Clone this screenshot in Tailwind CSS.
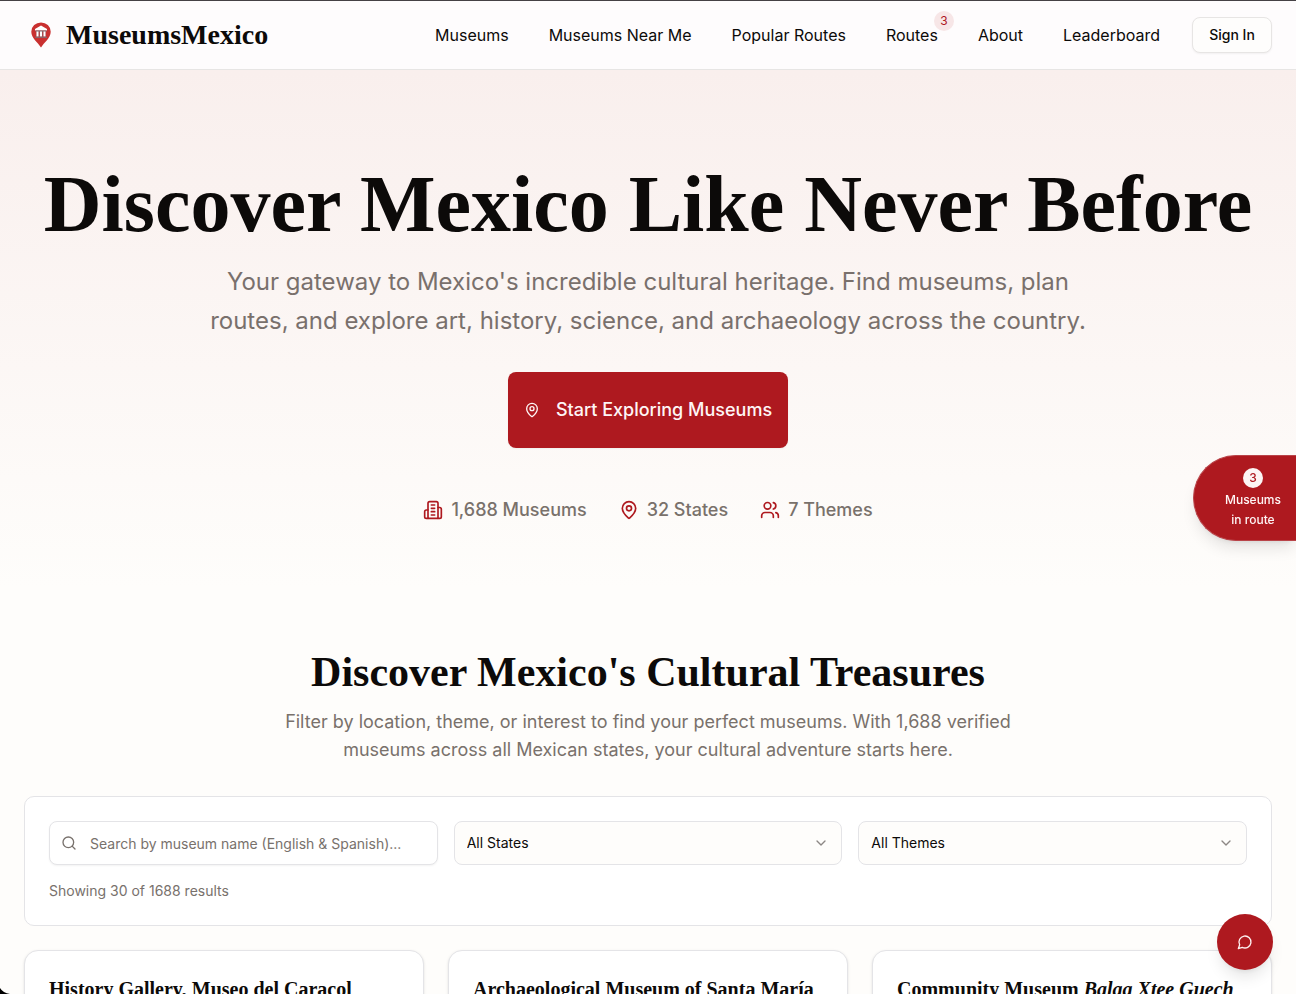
<!DOCTYPE html>
<html lang="en">
<head>
    <meta charset="UTF-8">
    <meta name="viewport" content="width=device-width,initial-scale=1.0">
    <title>MuseumsMexico</title>
    <script src="https://cdn.jsdelivr.net/npm/@tailwindcss/browser@4"></script>
</head>
<body class="h-screen overflow-hidden bg-[#fefdfb] font-['Inter',sans-serif] text-[#0c0a09]">
<header class="border-t border-b border-t-[#454145] border-b-[#e7e5e4] bg-[#fefcfd]">
    <div class="flex h-[68px] items-center justify-between px-6">
        <a href="#" class="flex items-center gap-2">
            <svg class="size-[34px]" viewBox="0 0 34 34">
                <path d="M17 29.500C14 24.500 7.300 20 7.300 13.700a9.700 9.300 0 0 1 19.400 0C26.700 20 20 24.500 17 29.500Z" fill="#c93030"/>
                <path d="M11 12.500v-1.500l6-3.500 6 3.500v1.500Z" fill="#fff"/>
                <path d="M12 13h10v6H12Z" fill="#a84a4e"/>
                <path d="M13.500 13v5.500M17 13v5.500M20.500 13v5.500" stroke="#fff" stroke-width="2"/>
                <path d="M11.500 13h11M11 19.300h12" stroke="#7d7077" stroke-width="1"/>
            </svg>
            <span class="font-['Liberation_Serif',serif] text-[28px] leading-8 font-bold">MuseumsMexico</span>
        </a>
        <div class="flex items-center gap-8">
            <nav class="flex items-center gap-10 text-base">
                <a href="#">Museums</a>
                <a href="#">Museums Near Me</a>
                <a href="#">Popular Routes</a>
                <a href="#" class="relative">Routes
                    <span class="absolute -top-3 -right-4 flex size-5 items-center justify-center rounded-full bg-[#f7e6e7] text-xs text-[#ae191f]">3</span>
                </a>
                <a href="#">About</a>
                <a href="#">Leaderboard</a>
            </nav>
            <button type="button" class="h-9 w-20 rounded-lg border border-[#e7e5e4] bg-[#fefdfc] text-sm font-medium shadow-xs">Sign In</button>
        </div>
    </div>
</header>
<main>
    <section class="bg-linear-to-b from-[#f9efed] to-[#fefdfb] px-6 pt-[98px] pb-16 text-center">
        <h1 class="font-['Liberation_Serif',serif] text-[80px] leading-[72px] font-bold whitespace-nowrap">Discover Mexico Like Never Before</h1>
        <p class="mx-auto mt-[22px] max-w-[896px] text-2xl leading-[39px] text-[#79706c]">Your gateway to Mexico's incredible cultural heritage. Find museums, plan routes, and explore art, history, science, and archaeology across the country.</p>
        <button type="button" class="mx-auto mt-8 flex h-[76px] items-center gap-4 rounded-lg bg-[#ae191f] px-4 text-lg font-medium text-[#fef5f5] shadow-xs">
            <svg class="size-4" viewBox="0 0 24 24" fill="none" stroke="currentColor" stroke-width="2" stroke-linecap="round" stroke-linejoin="round">
                <path d="M20 10c0 4.993-5.539 10.193-7.399 11.799a1 1 0 0 1-1.202 0C9.539 20.193 4 14.993 4 10a8 8 0 0 1 16 0"/>
                <circle cx="12" cy="10" r="3"/>
            </svg>
            Start Exploring Museums
        </button>
        <ul class="mt-12 flex justify-center gap-8 text-lg leading-7 font-medium text-[#79716b]">
            <li class="flex items-center gap-2">
                <svg class="size-5 text-[#ae191f]" viewBox="0 0 24 24" fill="none" stroke="currentColor" stroke-width="2" stroke-linecap="round" stroke-linejoin="round">
                    <path d="M6 22V4a2 2 0 0 1 2-2h8a2 2 0 0 1 2 2v18Z"/>
                    <path d="M6 12H4a2 2 0 0 0-2 2v6a2 2 0 0 0 2 2h2M18 9h2a2 2 0 0 1 2 2v9a2 2 0 0 1-2 2h-2M10 6h4M10 10h4M10 14h4M10 18h4"/>
                </svg>
                1,688 Museums
            </li>
            <li class="flex items-center gap-2">
                <svg class="size-5 text-[#ae191f]" viewBox="0 0 24 24" fill="none" stroke="currentColor" stroke-width="2" stroke-linecap="round" stroke-linejoin="round">
                    <path d="M20 10c0 4.993-5.539 10.193-7.399 11.799a1 1 0 0 1-1.202 0C9.539 20.193 4 14.993 4 10a8 8 0 0 1 16 0"/>
                    <circle cx="12" cy="10" r="3"/>
                </svg>
                32 States
            </li>
            <li class="flex items-center gap-2">
                <svg class="size-5 text-[#ae191f]" viewBox="0 0 24 24" fill="none" stroke="currentColor" stroke-width="2" stroke-linecap="round" stroke-linejoin="round">
                    <path d="M16 21v-2a4 4 0 0 0-4-4H6a4 4 0 0 0-4 4v2M22 21v-2a4 4 0 0 0-3-3.870M16 3.130a4 4 0 0 1 0 7.750"/>
                    <circle cx="9" cy="7" r="4"/>
                </svg>
                7 Themes
            </li>
        </ul>
    </section>
    <section class="px-6 pt-16">
        <div class="text-center">
            <h2 class="font-['Liberation_Serif',serif] text-[42px] leading-10 font-bold">Discover Mexico's Cultural Treasures</h2>
            <p class="mx-auto mt-4 max-w-3xl text-lg leading-7 text-[#79716b]">Filter by location, theme, or interest to find your perfect museums. With 1,688 verified<br>museums across all Mexican states, your cultural adventure starts here.</p>
        </div>
        <div class="mt-8 rounded-[10px] border border-[#e4e4e7] bg-white p-6">
            <form class="grid grid-cols-3 gap-4 text-sm">
                <div class="relative">
                    <svg class="absolute top-[14px] left-3 size-4 text-[#78716c]" viewBox="0 0 24 24" fill="none" stroke="currentColor" stroke-width="2" stroke-linecap="round" stroke-linejoin="round">
                        <circle cx="11" cy="11" r="8"/>
                        <path d="m21 21-4.300-4.300"/>
                    </svg>
                    <input type="text" aria-label="Search museums" placeholder="Search by museum name (English &amp; Spanish)..." class="h-11 w-full rounded-lg border border-[#e4e4e7] bg-white pl-10 pr-3 shadow-xs placeholder:text-[#78716c]">
                </div>
                <div class="relative">
                    <select aria-label="State" class="h-11 w-full appearance-none rounded-lg border border-[#e4e4e7] bg-[#fefdfb] px-3">
                        <option>All States</option>
                    </select>
                    <svg class="pointer-events-none absolute top-[14px] right-[13px] size-4 text-[#8c8784]" viewBox="0 0 24 24" fill="none" stroke="currentColor" stroke-width="2" stroke-linecap="round" stroke-linejoin="round">
                        <path d="m6 9 6 6 6-6"/>
                    </svg>
                </div>
                <div class="relative">
                    <select aria-label="Theme" class="h-11 w-full appearance-none rounded-lg border border-[#e4e4e7] bg-[#fefdfb] px-3">
                        <option>All Themes</option>
                    </select>
                    <svg class="pointer-events-none absolute top-[14px] right-[13px] size-4 text-[#8c8784]" viewBox="0 0 24 24" fill="none" stroke="currentColor" stroke-width="2" stroke-linecap="round" stroke-linejoin="round">
                        <path d="m6 9 6 6 6-6"/>
                    </svg>
                </div>
            </form>
            <p class="mt-4 text-sm text-[#78716c]">Showing 30 of 1688 results</p>
        </div>
        <div class="mt-6 grid grid-cols-3 gap-6 font-['Liberation_Serif',serif]">
            <article class="rounded-[14px] border border-[#e4e4e7] bg-white p-6 shadow-sm">
                <h3 class="text-xl leading-7 font-bold whitespace-nowrap">History Gallery, Museo del Caracol</h3>
            </article>
            <article class="rounded-[14px] border border-[#e4e4e7] bg-white p-6 shadow-sm">
                <h3 class="text-xl leading-7 font-bold whitespace-nowrap">Archaeological Museum of Santa María</h3>
            </article>
            <article class="rounded-[14px] border border-[#e4e4e7] bg-white p-6 shadow-sm">
                <h3 class="text-xl leading-7 font-bold whitespace-nowrap">Community Museum <em>Balaa Xtee Guech</em></h3>
            </article>
        </div>
    </section>
</main>
<button type="button" class="fixed top-[455px] right-0 flex flex-col items-center gap-0.5 rounded-l-full border border-r-0 border-[#b94449] bg-[#ae191f] pt-3 pr-[15px] pb-2.5 pl-[31px] text-xs leading-5 font-medium text-[#fef5f5] shadow-lg">
    <span class="flex size-5 items-center justify-center rounded-full bg-[#fcf5f4] text-[#ae191f]">3</span>
    <span>Museums<br>in route</span>
</button>
<button type="button" aria-label="Open chat" class="fixed right-[23px] bottom-6 flex size-14 items-center justify-center rounded-full bg-[#ae191f] text-[#fef0f0] shadow-lg">
    <svg class="size-4" viewBox="0 0 24 24" fill="none" stroke="currentColor" stroke-width="2" stroke-linecap="round" stroke-linejoin="round">
        <path d="M7.900 20A9 9 0 1 0 4 16.100L2 22Z"/>
    </svg>
</button>
<svg class="pointer-events-none fixed bottom-0 left-0 size-[10px]" viewBox="0 0 10 10">
    <path d="M0 4Q3 9 10 10H0Z"/>
</svg>
</body>
</html>
